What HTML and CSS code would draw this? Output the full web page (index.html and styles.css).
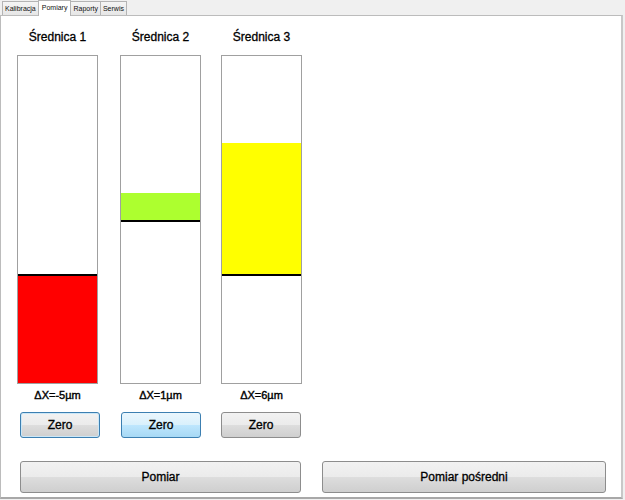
FILE: index.html
```html
<!DOCTYPE html>
<html lang="pl">

<head>
    <meta charset="UTF-8">
    <title>Pomiary</title>
    <link rel="stylesheet" href="styles.css">
</head>

<body>
    <div class="tabs">
        <div class="tab">Kalibracja</div>
        <div class="tab active">Pomiary</div>
        <div class="tab">Raporty</div>
        <div class="tab">Serwis</div>
    </div>

    <div class="panel">
        <div class="gauges">
            <div class="gauge">
                <div class="title">Średnica 1</div>
                <div class="box">
                    <div style="height: 218px"></div>
                    <div class="line"></div>
                    <div class="fill red"></div>
                </div>
                <div class="delta">ΔX=-5µm</div>
                <button class="btn zero focused">Zero</button>
            </div>

            <div class="gauge g2">
                <div class="title">Średnica 2</div>
                <div class="box">
                    <div style="height: 137px"></div>
                    <div class="green" style="height: 27px"></div>
                    <div class="line"></div>
                </div>
                <div class="delta">ΔX=1µm</div>
                <button class="btn zero hover">Zero</button>
            </div>

            <div class="gauge g3">
                <div class="title">Średnica 3</div>
                <div class="box">
                    <div style="height: 87px"></div>
                    <div class="yellow" style="height: 131px"></div>
                    <div class="line"></div>
                </div>
                <div class="delta">ΔX=6µm</div>
                <button class="btn zero">Zero</button>
            </div>
        </div>

        <div class="actions">
            <button class="btn wide">Pomiar</button>
            <button class="btn wide second">Pomiar pośredni</button>
        </div>
    </div>
</body>

</html>
```

FILE: styles.css
```css
body {
    margin: 0;
    padding: 0;
    background-color: #f0f0f0;
    font-family: "Liberation Sans", Arial, sans-serif;
    width: 625px;
    height: 500px;
    overflow: hidden;
}

.tabs {
    display: flex;
    height: 15px;
    padding-left: 2px;
    align-items: flex-end;
}

.tab {
    height: 13px;
    line-height: 13px;
    padding: 0 2px;
    font-size: 7px;
    color: #111;
    border: 1px solid #b4b4b4;
    border-bottom: none;
    background: linear-gradient(#f5f5f5, #e6e6e6);
    margin-right: -1px;
}

.tab.active {
    height: 15px;
    line-height: 14px;
    background-color: #fff;
    background-image: none;
    position: relative;
    z-index: 1;
    margin-bottom: -1px;
    padding: 0 3px;
}

.panel {
    width: 620px;
    height: 481px;
    background-color: #fff;
    border: 1px solid #bcbcbc;
    border-right: 2px solid #c8c8c8;
    border-bottom: 2px solid #a8a8a8;
}

.gauges {
    display: flex;
    padding-left: 16px;
    padding-top: 13px;
}

.gauge {
    width: 81px;
    display: flex;
    flex-direction: column;
}

.g2 {
    margin-left: 22px;
}

.g3 {
    margin-left: 20px;
}

.title {
    height: 16px;
    line-height: 16px;
    font-size: 12px;
    text-align: center;
    color: #000;
    margin-bottom: 10px;
    -webkit-text-stroke: 0.3px #000;
}

.box {
    height: 327px;
    border: 1px solid #a0a0a0;
    display: flex;
    flex-direction: column;
    background-color: #fff;
}

.line {
    height: 2px;
    background-color: #000;
}

.fill {
    flex: 1;
}

.red {
    background-color: #ff0000;
}

.green {
    background-color: #adff2f;
}

.yellow {
    background-color: #ffff00;
}

.delta {
    margin-top: 4px;
    height: 14px;
    line-height: 14px;
    font-size: 11px;
    text-align: center;
    color: #000;
    -webkit-text-stroke: 0.4px #000;
}

.btn {
    font-family: "Liberation Sans", Arial, sans-serif;
    font-size: 12px;
    color: #000;
    -webkit-text-stroke: 0.3px #000;
    border: 1px solid #8d8d8d;
    border-radius: 3px;
    background: linear-gradient(#f2f2f2 0%, #ebebeb 50%, #dddddd 51%, #cfcfcf 100%);
    padding: 0;
}

.zero {
    width: 80px;
    height: 26px;
    margin-top: 10px;
    margin-left: 3px;
}

.g2 .zero {
    margin-left: 1px;
}

.g3 .zero {
    margin-left: 0;
}

.zero.focused {
    border-color: #3c7fb1;
    box-shadow: inset 0 0 0 1px #cbe7f7;
}

.zero.hover {
    border-color: #3c7fb1;
    background: linear-gradient(#eaf6fd 0%, #d9f0fc 50%, #bee6fd 51%, #a7d9f5 100%);
}

.actions {
    display: flex;
    padding-left: 19px;
    margin-top: 23px;
}

.wide {
    width: 281px;
    height: 32px;
}

.second {
    width: 284px;
    margin-left: 21px;
}
```
